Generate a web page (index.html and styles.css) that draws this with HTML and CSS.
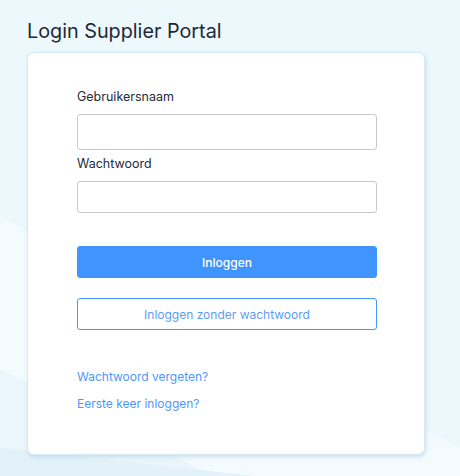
FILE: index.html
```html
<!DOCTYPE html>
<html lang="nl">
<head>
<meta charset="utf-8">
<title>Login Supplier Portal</title>
<link rel="stylesheet" href="styles.css">
</head>
<body>
<main class="page">
  <h1 class="title">Login Supplier Portal</h1>
  <section class="card">
    <form class="form">
      <label class="label" for="user">Gebruikersnaam</label>
      <input class="input input-user" id="user" type="text">
      <label class="label label-pass" for="pass">Wachtwoord</label>
      <input class="input input-pass" id="pass" type="password">
      <button class="btn btn-primary" type="button">Inloggen</button>
      <button class="btn btn-outline" type="button">Inloggen zonder wachtwoord</button>
    </form>
    <nav class="links">
      <a class="link" href="#">Wachtwoord vergeten?</a>
      <a class="link" href="#">Eerste keer inloggen?</a>
    </nav>
  </section>
</main>
</body>
</html>
```
FILE: styles.css
```css
* { box-sizing: border-box; }
html, body { margin: 0; height: 100%; }
body {
  font-family: Inter, "Noto Sans", sans-serif;
  background-color: #edf8fd;
  background-image:
    linear-gradient(186.4deg, transparent 0 496px, #e3f1f9 496px),
    linear-gradient(206.6deg, transparent 0 400px, #f4fbfe 400px 536px, #ebf6fc 536px);
  overflow: hidden;
}
.page {
  padding: 19px 0 0 27px;
}
.title {
  margin: 0;
  font-size: 19.8px;
  line-height: 24px;
  font-weight: 400;
  color: #1d2938;
}
.card {
  margin-top: 9px;
  width: 398px;
  height: 403px;
  background: #fff;
  border: 1px solid #d5e9f7;
  border-radius: 7px;
  box-shadow: 1px 2px 4px rgba(120, 160, 190, 0.3);
  padding: 36px 49px 0;
}
.form {
  display: flex;
  flex-direction: column;
}
.label {
  font-size: 12.5px;
  line-height: 16px;
  color: #252b3a;
  margin-bottom: 9px;
}
.label-pass { margin-top: 6px; }
.input {
  width: 300px;
  border: 1px solid #c9c9c9;
  border-radius: 3px;
  background: #fff;
  font: inherit;
}
.input-user { height: 36px; }
.input-pass { height: 32px; }
.btn {
  width: 300px;
  height: 32px;
  border-radius: 3px;
  font-family: inherit;
  font-size: 12px;
  cursor: pointer;
}
.btn-primary {
  margin-top: 33px;
  background: #3f95fd;
  border: 1px solid #3f95fd;
  color: #fff;
  font-weight: 500;
}
.btn-outline {
  margin-top: 20px;
  background: #fff;
  border: 1px solid #4596fa;
  color: #5d9cf5;
}
.links {
  display: flex;
  flex-direction: column;
  gap: 11px;
  margin-top: 39px;
}
.link {
  font-size: 12px;
  line-height: 16px;
  color: #4f97f8;
  text-decoration: none;
}
```
